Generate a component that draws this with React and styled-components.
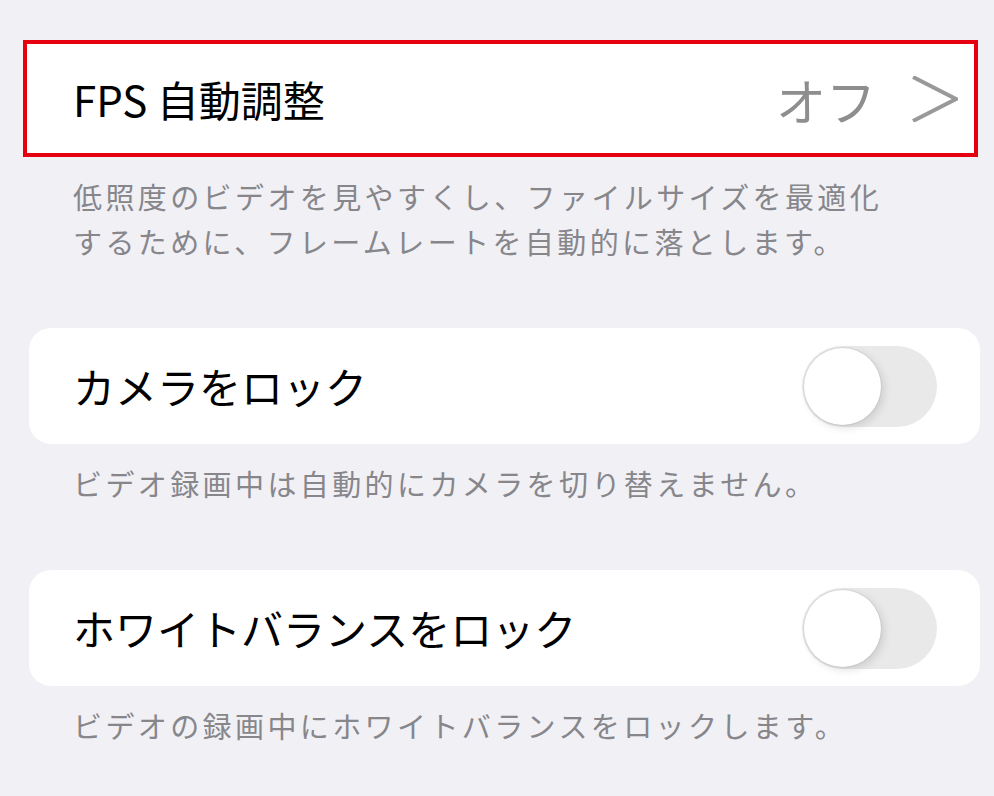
import React from 'react';
import styled, { createGlobalStyle } from 'styled-components';

const GlobalStyle = createGlobalStyle`
  html, body {
    margin: 0;
    padding: 0;
    background: #f1f0f5;
  }
  body {
    font-family: "Noto Sans CJK JP", "Noto Sans", sans-serif;
  }
`;

const Page = styled.div`
  width: 994px;
  height: 796px;
  overflow: hidden;
  padding: 40px 14px 0 29px;
  box-sizing: border-box;
  background: #f1f0f5;
`;

const Card = styled.div`
  display: flex;
  align-items: center;
  justify-content: space-between;
  box-sizing: border-box;
  height: ${(p) => (p.$highlighted ? '117px' : '116px')};
  background: #fff;
  border-radius: ${(p) => (p.$highlighted ? '0' : '22px')};
  border: ${(p) => (p.$highlighted ? '4px solid #e6000f' : 'none')};
  margin: ${(p) => (p.$highlighted ? '0 2px 0 -6px' : '0')};
  padding: ${(p) => (p.$highlighted ? '0 16px 0 46px' : '0 43px 0 44px')};
`;

const Title = styled.span`
  font-size: 42px;
  color: #000;
  line-height: 1;
`;

const Trail = styled.div`
  display: flex;
  align-items: center;
  gap: 36px;
`;

const Value = styled.span`
  font-size: 50px;
  color: #8e8e8e;
  line-height: 1;
`;

const Note = styled.p`
  margin: 0 0 64px 0;
  padding: 17px 0 0 44px;
  font-size: 29px;
  letter-spacing: 3.4px;
  line-height: 45px;
  color: #86868b;
`;

const Track = styled.div`
  width: 135px;
  height: 81px;
  border-radius: 41px;
  background: #e9e9ea;
  position: relative;
  flex-shrink: 0;
`;

const Knob = styled.div`
  position: absolute;
  left: 2px;
  top: 2px;
  width: 77px;
  height: 77px;
  border-radius: 50%;
  background: #fff;
  box-shadow: 0 0 0 1px rgba(0, 0, 0, 0.06), 3px 3px 8px rgba(0, 0, 0, 0.12);
`;

function Chevron() {
  return (
    <svg width="46" height="46" viewBox="0 0 46 46">
      <polyline
        points="1,1 44,23 1,45"
        fill="none"
        stroke="#999"
        strokeWidth="4"
      />
    </svg>
  );
}

function Toggle() {
  return (
    <Track>
      <Knob />
    </Track>
  );
}

export default function App() {
  return (
    <Page>
      <GlobalStyle />
      <Card $highlighted>
        <Title>FPS 自動調整</Title>
        <Trail>
          <Value>オフ</Value>
          <Chevron />
        </Trail>
      </Card>
      <Note>
        低照度のビデオを見やすくし、ファイルサイズを最適化
        <br />
        するために、フレームレートを自動的に落とします。
      </Note>

      <Card>
        <Title>カメラをロック</Title>
        <Toggle />
      </Card>
      <Note>ビデオ録画中は自動的にカメラを切り替えません。</Note>

      <Card>
        <Title>ホワイトバランスをロック</Title>
        <Toggle />
      </Card>
      <Note>ビデオの録画中にホワイトバランスをロックします。</Note>
    </Page>
  );
}
